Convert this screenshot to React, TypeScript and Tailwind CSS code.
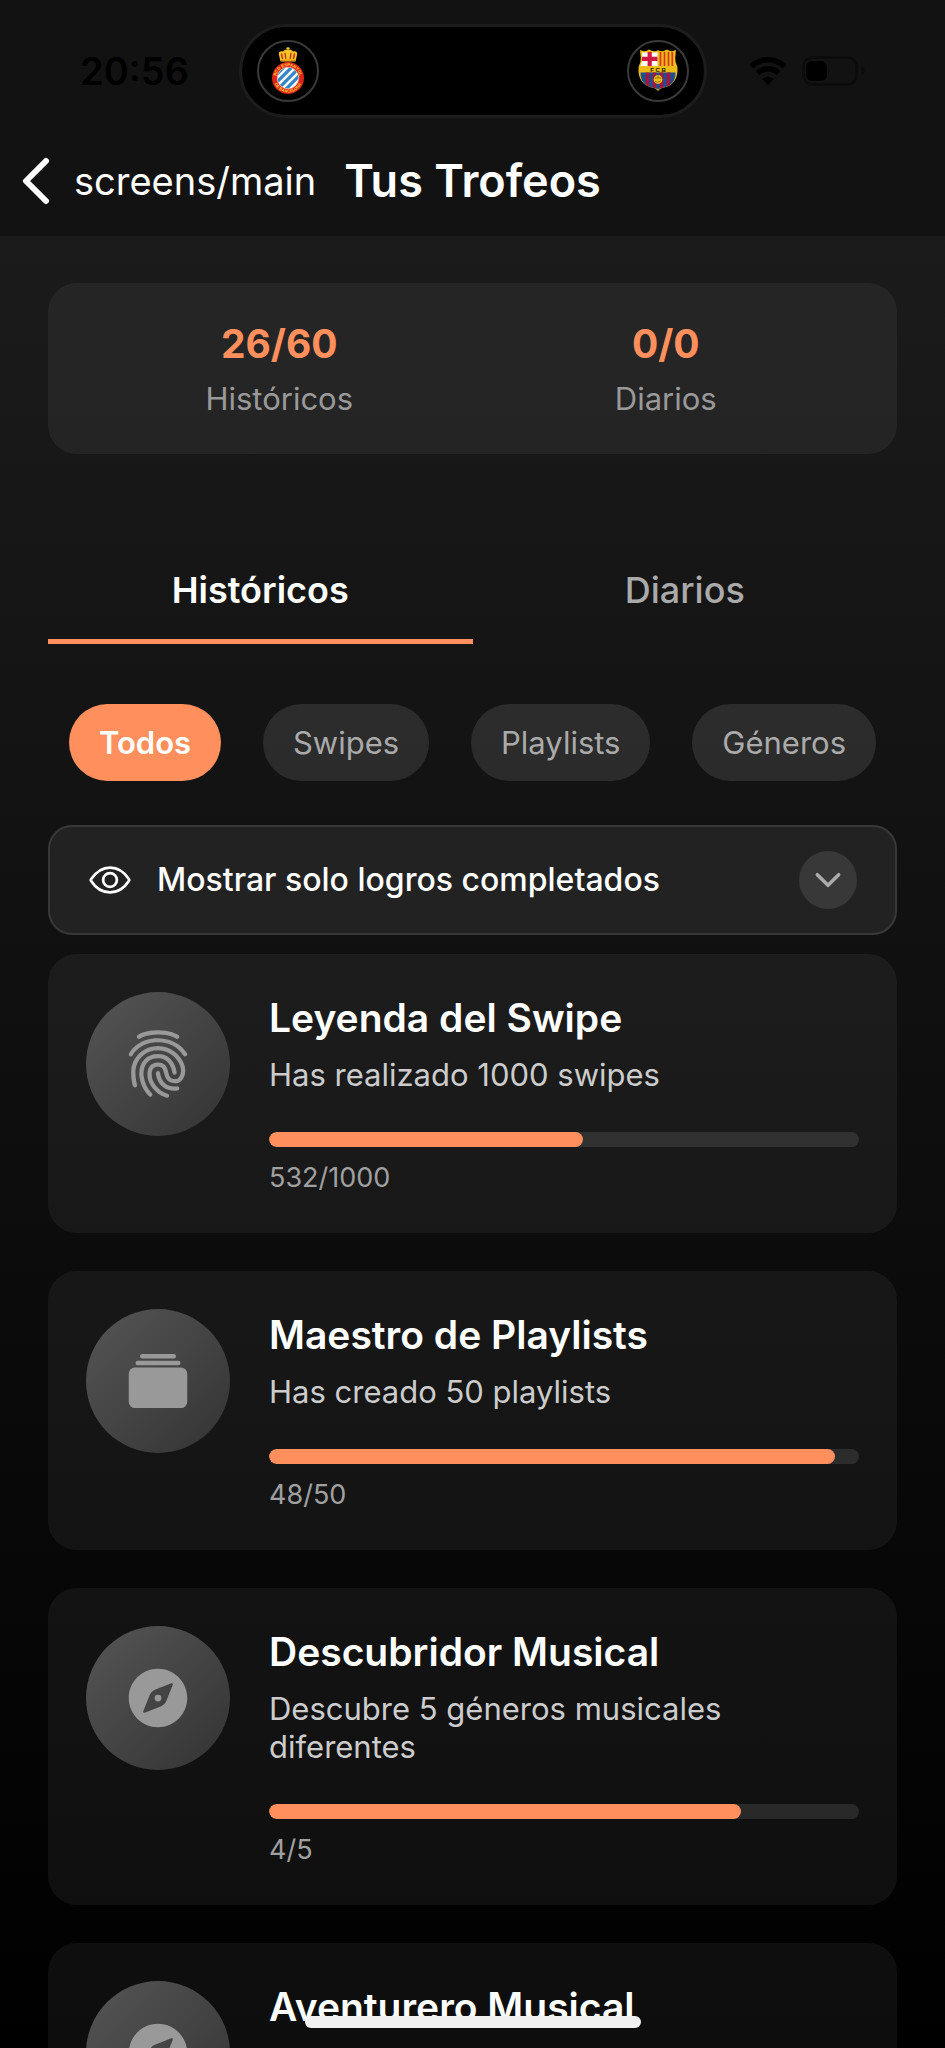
import { IoAlbums, IoChevronDown, IoCompass, IoEyeOutline, IoFingerPrint } from "react-icons/io5";
import type { IconType } from "react-icons";

type Trophy = {
  title: string;
  description?: string;
  current?: number;
  goal?: number;
  Icon: IconType;
};

const trophies: Trophy[] = [
  { title: "Leyenda del Swipe", description: "Has realizado 1000 swipes", current: 532, goal: 1000, Icon: IoFingerPrint },
  { title: "Maestro de Playlists", description: "Has creado 50 playlists", current: 48, goal: 50, Icon: IoAlbums },
  { title: "Descubridor Musical", description: "Descubre 5 géneros musicales diferentes", current: 4, goal: 5, Icon: IoCompass },
  { title: "Aventurero Musical", Icon: IoCompass },
];

const filters = ["Todos", "Swipes", "Playlists", "Géneros"];

function EspanyolCrest() {
  return (
    <svg viewBox="0 0 62 62" className="size-[62px]" aria-hidden="true">
      <defs>
        <clipPath id="esp-inner"><circle cx="31" cy="38" r="10.6" /></clipPath>
        <path id="esp-top" d="M19.3 39.5a11.8 11.8 0 1 1 23.4 0" />
        <path id="esp-bottom" d="M16.8 41a14.5 14.5 0 0 0 28.4 0" />
      </defs>
      <circle cx="31" cy="31" r="30" fill="#000" stroke="#3a3a3a" strokeWidth="2" />
      <path d="M23.5 21.5 22 15c-1-3 1.500-4.500 4-3.500 1-1.500 3-2 5-1.500 2-.5 4 0 5 1.500 2.500-1 5 .5 4 3.500l-1.500 6.500z" fill="#f5c426" />
      <path d="M31 7v5M29.300 8.500h3.400" stroke="#f5c426" strokeWidth="1.300" />
      <path d="M25.500 18.500 24.500 14M28.700 18.200l-.6-4.700M33.300 18.200l.6-4.700M36.500 18.500l1-4.500" stroke="#c4351a" strokeWidth="1.500" strokeLinecap="round" />
      <path d="M24 20.600q7-1.300 14 0" stroke="#e8860f" strokeWidth="1" fill="none" />
      <circle cx="31" cy="38" r="16" fill="#dc2417" />
      <circle cx="31" cy="38" r="10.600" fill="#fff" />
      <g clipPath="url(#esp-inner)" stroke="#2f86c6" strokeWidth="3.200">
        <path d="M14 40 34 20M17 45 41 21M20 50 46 24M26 52 50 28" />
      </g>
      <circle cx="31" cy="38" r="10.800" fill="none" stroke="#f0dccb" strokeWidth=".6" />
      <g fill="#ffc93c" fontFamily="Liberation Sans, sans-serif" fontSize="4.200" fontWeight="700">
        <text textAnchor="middle"><textPath href="#esp-top" startOffset="50%">RCD ESPANYOL</textPath></text>
        <text textAnchor="middle"><textPath href="#esp-bottom" startOffset="50%">DE BARCELONA</textPath></text>
      </g>
    </svg>
  );
}

function BarcelonaCrest() {
  const outline = "M13 10q5 2.500 9-.5 4.500 3 9 .8 4.500 2.200 9-.8 4 3 9 .5l-.8 8q-.2 4 2.200 9c1.200 12-5 18.500-13 20.500-3 .8-5 1.500-6.400 3.500-1.400-2-3.400-2.700-6.400-3.500-8-2-14.200-8.500-13-20.500q2.400-5 2.200-9z";
  return (
    <svg viewBox="0 0 62 62" className="size-[62px]" aria-hidden="true">
      <defs>
        <clipPath id="fcb-shape"><path d={outline} /></clipPath>
        <clipPath id="fcb-lower"><path d="M13.500 32.500h35c.2 9-4.500 13-11 14.800-3 .8-5 1.200-6.500 2.200-1.500-1-3.500-1.400-6.500-2.200-6.500-1.800-11.200-5.800-11-14.800z" /></clipPath>
      </defs>
      <circle cx="31" cy="31" r="30" fill="#000" stroke="#3a3a3a" strokeWidth="2" />
      <path d={outline} fill="#eebc16" />
      <g clipPath="url(#fcb-shape)">
        <path d="M15 12.500h15.500V26H13.500l2-6z" fill="#fff" />
        <path d="M22.700 12v14M15 18.800h15.500" stroke="#cf1742" strokeWidth="4.200" />
        <path d="M33.500 12v14M37.500 12v14M41.500 12v14M45.300 12v14" stroke="#d83424" strokeWidth="1.700" />
      </g>
      <g clipPath="url(#fcb-lower)">
        <path d="M13 32h36v18H13z" fill="#1d4f91" />
        <path d="M20.500 32v18M27.500 32v18M34.500 32v18M41.500 32v18" stroke="#a3173f" strokeWidth="3.600" />
      </g>
      <circle cx="31" cy="39.500" r="4.400" fill="#eebc16" />
      <path d="M27.500 38.500q3.500-2 7 0M28 41.500q3 1.500 5.500-.5M31 35.500v3" stroke="#8c6a12" strokeWidth=".8" fill="none" />
      <text x="31" y="31.500" textAnchor="middle" fill="#1b1508" fontFamily="Liberation Sans, sans-serif" fontSize="6" fontWeight="700">F C B</text>
    </svg>
  );
}

function StatusBar() {
  return (
    <div className="grid grid-cols-[1fr_468px_1fr] items-center">
      <time className="pl-20 text-[38px] leading-[46px] font-semibold text-black">20:56</time>
      <div className="flex h-[94px] items-center justify-between rounded-full border-[3px] border-[#1c1c1c] bg-black px-[15px]">
        <EspanyolCrest />
        <BarcelonaCrest />
      </div>
      <div className="flex items-center gap-[15px] pl-[42px]">
        <svg viewBox="0 0 38 28" className="h-7 w-[38px]" fill="none" stroke="#000" strokeWidth="5.500" aria-hidden="true">
          <path d="M2.500 9.500a23.500 23.500 0 0 1 33 0" />
          <path d="M8.500 16a15 15 0 0 1 21 0" />
          <path d="M19 28l-5.800-5.900a8.200 8.200 0 0 1 11.600 0z" fill="#000" stroke="none" />
        </svg>
        <svg viewBox="0 0 64 30" className="h-[30px] w-16" aria-hidden="true">
          <rect x="1.500" y="1.500" width="53" height="27" rx="9" fill="none" stroke="#0b0b0b" strokeWidth="2.500" />
          <rect x="4" y="5" width="21" height="20" rx="6" fill="#000" />
          <path d="M59.500 10.500q3 1.500 3 4.500t-3 4.500z" fill="#0b0b0b" />
        </svg>
      </div>
    </div>
  );
}

function Stat({ value, label }: { value: string; label: string }) {
  return (
    <div className="flex flex-col items-center gap-[15px]">
      <strong className="text-[39px] leading-[46px] font-bold text-[#ff8f5c]">{value}</strong>
      <span className="text-[31px] leading-[34px] text-[#999999]">{label}</span>
    </div>
  );
}

function TrophyCard({ title, description, current, goal, Icon }: Trophy) {
  return (
    <li className="flex items-start gap-[39px] rounded-[29px] bg-white/5 p-[38px]">
      <div className="flex size-36 shrink-0 items-center justify-center rounded-full bg-linear-to-br/srgb from-[#555555] to-[#333333]">
        <Icon className="size-[72px] text-[#999999]" />
      </div>
      <div className="min-w-0 flex-1">
        <h2 className="text-[39px] leading-[52px] font-semibold text-white">{title}</h2>
        {description && <p className="mt-3 text-[31px] leading-[38px] text-[#cccccc]">{description}</p>}
        {current !== undefined && goal !== undefined && (
          <>
            <div
              role="progressbar"
              aria-label={title}
              aria-valuenow={current}
              aria-valuemax={goal}
              className="mt-[38px] h-[15px] overflow-hidden rounded-full bg-white/10"
            >
              <div className="h-full rounded-full bg-[#ff8f5c]" style={{ width: `${(current / goal) * 100}%` }} />
            </div>
            <p className="mt-[14px] text-[27px] leading-[34px] text-[#a0a0a0]">{current}/{goal}</p>
          </>
        )}
      </div>
    </li>
  );
}

export default function App() {
  return (
    <div className="relative flex h-screen flex-col overflow-hidden bg-black font-['Inter',sans-serif]">
      <header className="bg-[#121212] pt-6">
        <StatusBar />
        <nav className="flex h-[118px] items-center pt-2 pl-[22px] text-white">
          <a href="#main" className="flex items-center gap-6">
            <svg viewBox="0 0 28 48" className="h-12 w-7" fill="none" stroke="#fff" strokeWidth="6" strokeLinecap="round" strokeLinejoin="round" aria-hidden="true">
              <path d="M24 4 4 24l20 20" />
            </svg>
            <span className="text-[38px] leading-[52px]">screens/main</span>
          </a>
          <h1 className="ml-7 text-[45px] leading-[52px] font-semibold">Tus Trofeos</h1>
        </nav>
      </header>

      <main className="min-h-0 flex-1 overflow-y-auto bg-linear-to-b/srgb from-[#1b1b1b] to-black px-12 pt-[47px] [scrollbar-width:none]">
        <section className="grid grid-cols-2 rounded-[29px] bg-white/5 p-[38px]">
          <Stat value="26/60" label="Históricos" />
          <Stat value="0/0" label="Diarios" />
        </section>

        <div role="tablist" className="mt-[87px] grid grid-cols-2 text-[36px] leading-[44px]">
          <button role="tab" aria-selected="true" className="border-b-[5px] border-[#ff8f5c] py-[27px] font-semibold text-white">Históricos</button>
          <button role="tab" aria-selected="false" className="border-b-[5px] border-transparent py-[27px] font-medium text-[#aaaaaa]">Diarios</button>
        </div>

        <div className="mt-[60px] flex justify-around text-[31px] leading-[37px]">
          {filters.map((name, i) => (
            <button
              key={name}
              aria-pressed={i === 0}
              className={
                i === 0
                  ? "rounded-full bg-[#ff8f5c] px-[30px] py-5 font-semibold text-white"
                  : "rounded-full bg-white/10 px-[30px] py-5 text-[#aaaaaa]"
              }
            >
              {name}
            </button>
          ))}
        </div>

        <button className="mt-11 flex h-[110px] w-full items-center gap-[25px] rounded-3xl border-2 border-[#383838] bg-[#222222] px-[38px] text-left text-[32px] leading-[38px] font-medium text-white">
          <IoEyeOutline className="size-11 shrink-0" />
          <span className="flex-1">Mostrar solo logros completados</span>
          <span className="flex size-[58px] items-center justify-center rounded-full bg-[#383838] text-[#aaaaaa]">
            <IoChevronDown className="size-[38px]" />
          </span>
        </button>

        <ul className="mt-[19px] flex flex-col gap-[38px]">
          {trophies.map((t) => (
            <TrophyCard key={t.title} {...t} />
          ))}
        </ul>
      </main>

      <div className="absolute bottom-5 left-1/2 h-3 w-[336px] -translate-x-1/2 rounded-full bg-[#f0f0f0]" />
    </div>
  );
}
